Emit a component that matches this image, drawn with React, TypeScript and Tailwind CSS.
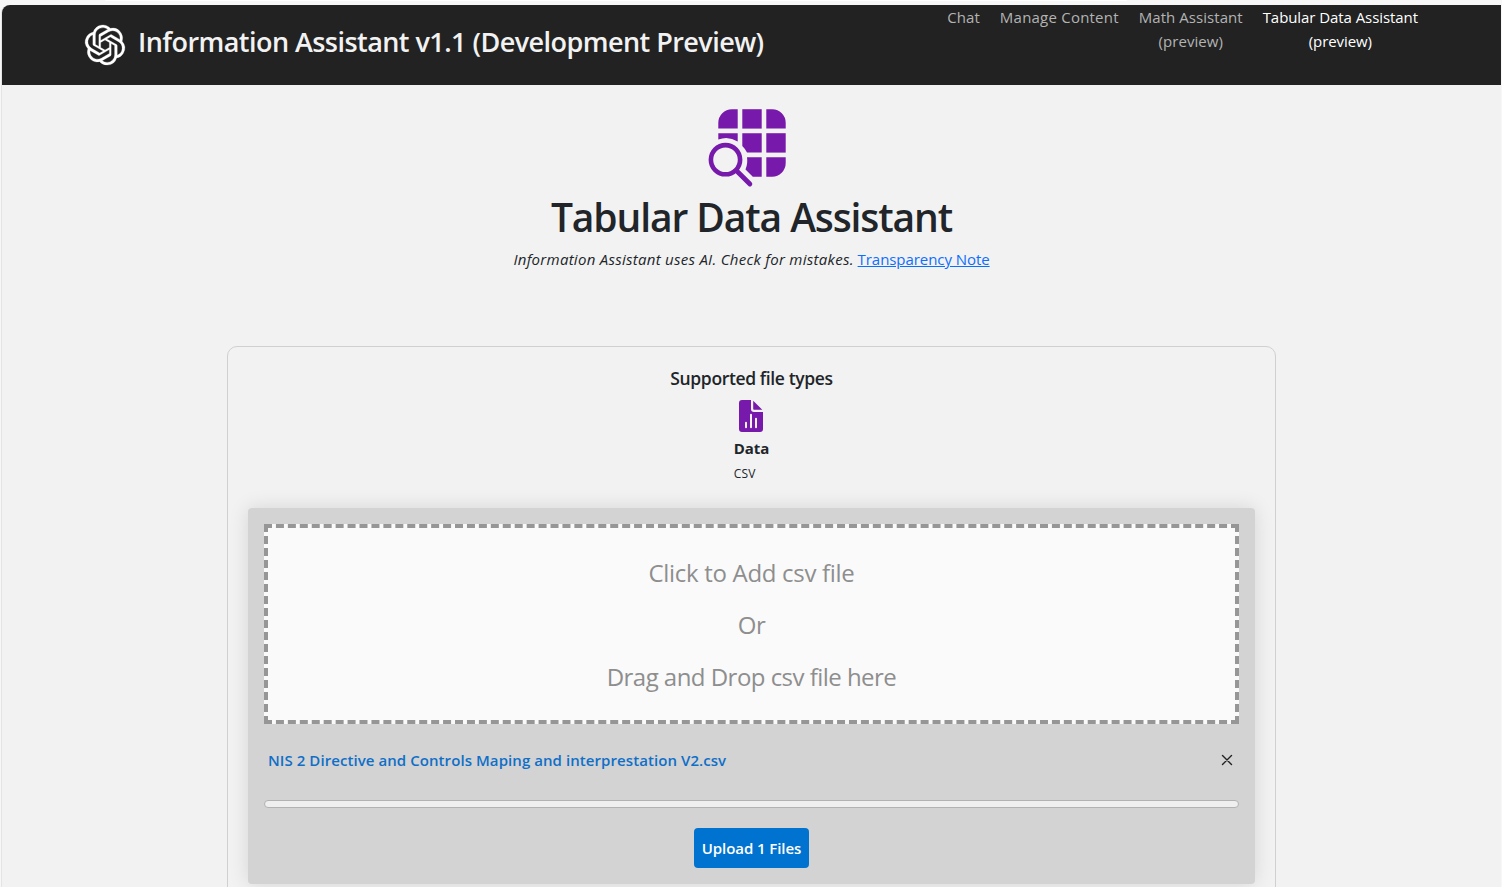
import { SiOpenai } from "react-icons/si";

function TableSearchIcon() {
  return (
    <svg width="80" height="80" viewBox="0 0 80 80" fill="#7719aa" className="block overflow-visible">
      <path d="M29.7 4.200v19.400H10.300V17.800A13.600 13.600 0 0 1 23.900 4.200z" />
      <path d="M34.300 4.200h19.400v19.400H34.300z" />
      <path d="M58.300 4.200h6a13.600 13.600 0 0 1 13.400 13.600v5.800H58.300z" />
      <path d="M10.300 28.200h19.400v8.200A22 22 0 0 0 10.300 34.400z" />
      <path d="M34.300 28.200h19.400v19.400H39A22 22 0 0 0 34.300 41z" />
      <path d="M58.300 28.200h19.400v19.400H58.300z" />
      <path d="M39 52.300h14.700v19.400h-8.900L37.500 64.500A22 22 0 0 0 39 52.300z" />
      <path d="M58.300 52.300h19.400v5.800A13.600 13.600 0 0 1 64.100 71.700h-5.800z" />
      <circle cx="17.500" cy="54.700" r="14.600" fill="none" stroke="#7719aa" strokeWidth="4.600" />
      <path d="M28.300 65.500L41.900 79" fill="none" stroke="#7719aa" strokeWidth="4.800" strokeLinecap="round" />
    </svg>
  );
}

function DocumentDataIcon() {
  return (
    <svg width="24" height="32" viewBox="0 0 24 32" className="block">
      <path
        fill="#7719aa"
        d="M12 0v9a3 3 0 0 0 3 3h9v17a3 3 0 0 1-3 3H3a3 3 0 0 1-3-3V3a3 3 0 0 1 3-3zM14.200.700L23.300 9.800H15a.8.8 0 0 1-.8-.8z"
      />
      <path
        d="M7 22.800v4.400M12 14.800v12.400M17 18.800v8.400"
        stroke="#f2f2f2"
        strokeWidth="2"
        strokeLinecap="round"
      />
    </svg>
  );
}

function Header() {
  return (
    <header className="flex h-20 justify-between rounded-tl-lg bg-[#222222] pr-[83px] pl-[83px]">
      <div className="flex items-center">
        <SiOpenai size={40} color="#ffffff" stroke="#ffffff" strokeWidth={0.15} className="overflow-visible" />
        <h3 className="ml-[13px] pb-1.5 text-[27px] font-semibold tracking-[-0.55px] whitespace-nowrap text-[#f2f2f2]">
          Information Assistant v1.1 (Development Preview)
        </h3>
      </div>
      <nav className="flex gap-5 text-center text-[15px] leading-6 tracking-[0.05px] whitespace-nowrap text-[#b3b3b3]">
        <a>Chat</a>
        <a className="tracking-[0.22px]">Manage Content</a>
        <a>
          Math Assistant
          <br />
          (preview)
        </a>
        <a className="tracking-[-0.07px] text-white">
          Tabular Data Assistant
          <br />
          (preview)
        </a>
      </nav>
    </header>
  );
}

function UploadPanel() {
  return (
    <div className="h-[376px] rounded bg-[#d3d3d3] p-4 shadow-[0_0_20px_rgba(0,0,0,0.12)]">
      <div className="flex h-50 flex-col items-center gap-4 border-4 border-dashed border-[#969696] bg-[#fafafa] pt-[27px] text-2xl leading-9 text-[#8e8e8e]">
        <p className="tracking-[-0.3px]">Click to Add csv file</p>
        <p className="tracking-[-0.5px]">Or</p>
        <p className="tracking-[-0.53px]">Drag and Drop csv file here</p>
      </div>
      <div className="mt-6 flex h-6 items-center justify-between pr-1.5 pl-1">
        <span className="text-[15px] font-semibold tracking-[0.07px] text-[#0f6fc8]">
          NIS 2 Directive and Controls Maping and interprestation V2.csv
        </span>
        <svg width="12" height="12" viewBox="0 0 12 12" stroke="#222" strokeWidth="1.400" strokeLinecap="round">
          <path d="M1.500 1.500l9 9M10.500 1.500l-9 9" />
        </svg>
      </div>
      <div className="mt-7 h-2 rounded-full border border-[#b2b2b2] bg-[#efefef]" />
      <div className="mt-5 flex justify-center">
        <button className="h-10 w-[115px] rounded bg-[#0073d1] text-[15px] font-semibold tracking-[-0.08px] whitespace-nowrap text-white">
          Upload 1 Files
        </button>
      </div>
    </div>
  );
}

export default function App() {
  return (
    <div className="flex h-[887px] flex-col overflow-hidden bg-[#f7f7f7] font-['Open_Sans','Noto_Sans',sans-serif] text-[#212529]">
      <div className="h-[5px] pr-[375px] pl-[105px]">
        <div className="h-px rounded-b bg-white" />
      </div>
      <div className="mr-px ml-px h-[882px] rounded-tl-lg border-l border-[#e4e4e4] bg-[#f2f2f2]">
        <Header />
        <main className="flex flex-col items-center">
          <div className="mt-5 mr-2">
            <TableSearchIcon />
          </div>
          <h1 className="mt-2 text-[39px] leading-12 font-semibold tracking-[-1.1px] whitespace-nowrap">
            Tabular Data Assistant
          </h1>
          <p className="mt-1.5 text-[15px] leading-6 whitespace-nowrap">
            <i className="tracking-[0.28px]">Information Assistant uses AI. Check for mistakes.</i>{" "}
            <a className="tracking-[-0.06px] text-[#0d6efd] underline">Transparency Note</a>
          </p>
          <section className="mt-[75px] h-[620px] w-[1049px] rounded-[10px] border border-[#d0d0d0] px-5 pt-[19px]">
            <div className="flex h-[142px] flex-col items-center">
              <h2 className="text-[17.500px] leading-6 font-semibold tracking-[-0.37px]">Supported file types</h2>
              <div className="mt-2.5 mr-px">
                <DocumentDataIcon />
              </div>
              <div className="mt-1 flex flex-col">
                <span className="text-[15px] leading-6 font-bold">Data</span>
                <span className="mt-1 text-xs leading-5 tracking-[0.2px]">CSV</span>
              </div>
            </div>
            <UploadPanel />
          </section>
        </main>
      </div>
    </div>
  );
}
